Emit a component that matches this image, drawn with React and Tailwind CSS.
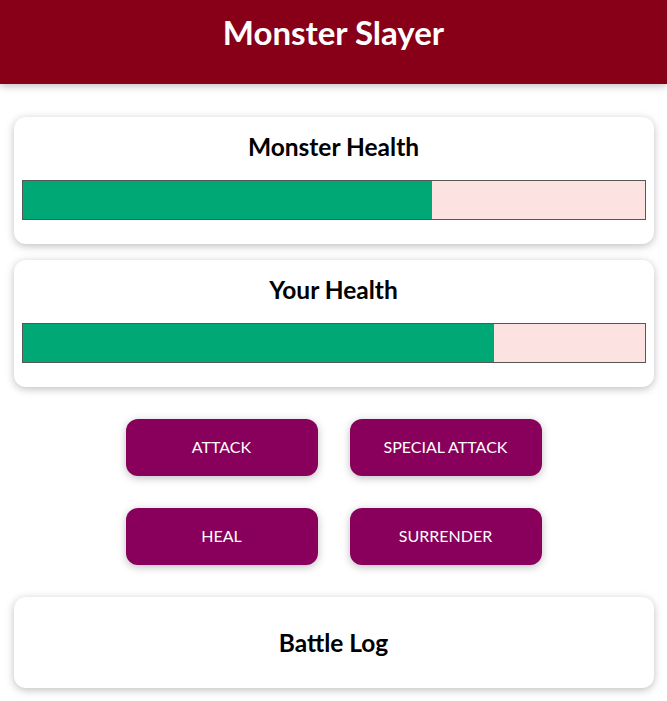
import React from "react";

const shadow = "shadow-[0_2px_8px_rgba(0,0,0,0.26)]";

const HealthCard = ({ title, value }) => (
  <section className={`w-[640px] mx-auto bg-white rounded-[12px] px-2 pt-[14px] pb-6 ${shadow}`}>
    <h2 className="text-center text-[24.5px] leading-8 font-bold text-black">{title}</h2>
    <div className="mt-[17px] h-10 border border-[#575757] bg-[#fde2e2]">
      <div className="h-full bg-[#00a876]" style={{ width: `${value}%` }} />
    </div>
  </section>
);

const ActionButton = ({ children }) => (
  <button
    className={`w-[192px] h-[57px] pb-[2px] rounded-[12px] bg-[#88005b] text-white text-[16px] uppercase ${shadow}`}
  >
    {children}
  </button>
);

export default function App() {
  const monsterHealth = 65.9;
  const playerHealth = 75.8;

  return (
    <div className="min-h-[701px] bg-white font-['Lato',sans-serif]">
      {/* Header */}
      <header className={`h-[84px] bg-[#880017] flex justify-center pt-[11px] ${shadow}`}>
        <h1 className="text-white text-[33px] leading-[42px] font-bold">Monster Slayer</h1>
      </header>

      <div className="pt-[33px] flex flex-col gap-4">
        <HealthCard title="Monster Health" value={monsterHealth} />
        <HealthCard title="Your Health" value={playerHealth} />
      </div>

      {/* Controls */}
      <div className="mt-8 grid grid-cols-[192px_192px] gap-x-8 gap-y-8 justify-center">
        <ActionButton>Attack</ActionButton>
        <ActionButton>Special Attack</ActionButton>
        <ActionButton>Heal</ActionButton>
        <ActionButton>Surrender</ActionButton>
      </div>

      {/* Battle log */}
      <section className={`mt-8 w-[640px] mx-auto h-[91px] bg-white rounded-[12px] flex items-center justify-center ${shadow}`}>
        <h2 className="text-[24.5px] leading-8 font-bold text-black">Battle Log</h2>
      </section>
    </div>
  );
}
